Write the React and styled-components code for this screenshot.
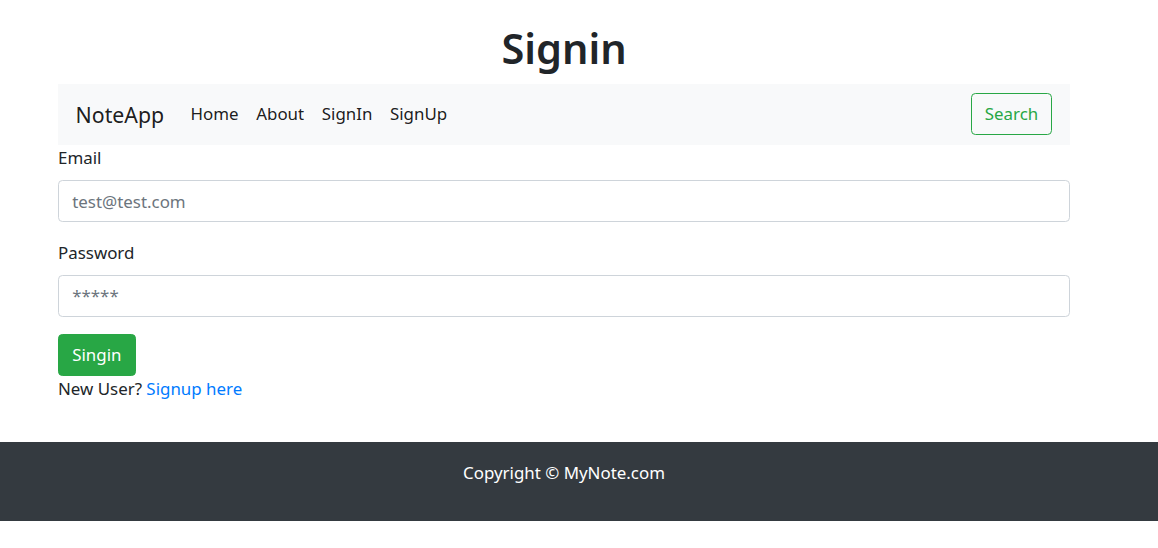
import React from 'react'
import styled, { createGlobalStyle } from 'styled-components'

const GlobalStyle = createGlobalStyle`
    body {
        margin: 0;
        background: #fff;
        color: #212529;
        font-family: "Noto Sans", "Open Sans", sans-serif;
        font-size: 16.9px;
        line-height: 26.4px;
    }
    * {
        box-sizing: border-box;
    }
`

const Container = styled.div`
    width: 1012px;
    margin-left: 58px;
`

const Title = styled.h1`
    margin: 22px 0 8.8px;
    font-size: 41.5px;
    font-weight: 600;
    line-height: 52.8px;
    text-align: center;
`

const Navbar = styled.nav`
    display: flex;
    align-items: center;
    padding: 8.8px 17.6px;
    background-color: #f8f9fa;
`

const Brand = styled.a`
    font-size: 21.3px;
    line-height: 33px;
    padding: 5.5px 0;
    margin-right: 17.6px;
    color: rgba(0, 0, 0, 0.9);
    text-decoration: none;
`

const NavList = styled.ul`
    display: flex;
    list-style: none;
    margin: 0 auto 0 0;
    padding: 0;
`

const NavLink = styled.a`
    display: block;
    padding: 8.8px;
    color: rgba(0, 0, 0, 0.9);
    text-decoration: none;
`

const OutlineButton = styled.button`
    font: inherit;
    height: 41.8px;
    padding: 0 13.2px;
    color: #28a745;
    background: transparent;
    border: 1px solid #28a745;
    border-radius: 4.4px;
`

const FormGroup = styled.div`
    margin-bottom: 17.6px;
`

const Label = styled.label`
    display: block;
    margin-bottom: 8.8px;
`

const Input = styled.input`
    display: block;
    width: 100%;
    height: 41.8px;
    padding: 6.6px 13.2px;
    font: inherit;
    color: #495057;
    border: 1px solid #ced4da;
    border-radius: 4.4px;
    &::placeholder {
        color: #6c757d;
    }
`

const SubmitButton = styled.button`
    font: inherit;
    height: 41.8px;
    padding: 0 13.2px;
    color: #fff;
    background-color: #28a745;
    border: 1px solid #28a745;
    border-radius: 4.4px;
`

const Note = styled.div`
    margin-bottom: 39px;
    a {
        color: #007bff;
        text-decoration: none;
    }
`

const Footer = styled.footer`
    background-color: #343a40;
    color: #fff;
    padding: 18px 0 17px;
    p {
        margin: 0 0 17.6px;
        text-align: center;
    }
`

const App = () => {
    const links = ['Home', 'About', 'SignIn', 'SignUp']
    return (
        <>
            <GlobalStyle />
            <Container>
                <Title>Signin</Title>
                <Navbar>
                    <Brand href="#">NoteApp</Brand>
                    <NavList>
                        {links.map((l) => (
                            <li key={l}>
                                <NavLink href="#">{l}</NavLink>
                            </li>
                        ))}
                    </NavList>
                    <OutlineButton>Search</OutlineButton>
                </Navbar>
                <form onSubmit={(e) => e.preventDefault()}>
                    <FormGroup>
                        <Label>Email</Label>
                        <Input type="email" placeholder="test@test.com" />
                    </FormGroup>
                    <FormGroup>
                        <Label>Password</Label>
                        <Input type="password" placeholder="*****" />
                    </FormGroup>
                    <SubmitButton type="submit">Singin</SubmitButton>
                </form>
                <Note>
                    New User? <a href="#">Signup here</a>
                </Note>
            </Container>
            <Footer>
                <Container>
                    <p>Copyright © MyNote.com</p>
                </Container>
            </Footer>
        </>
    )
}

export default App
